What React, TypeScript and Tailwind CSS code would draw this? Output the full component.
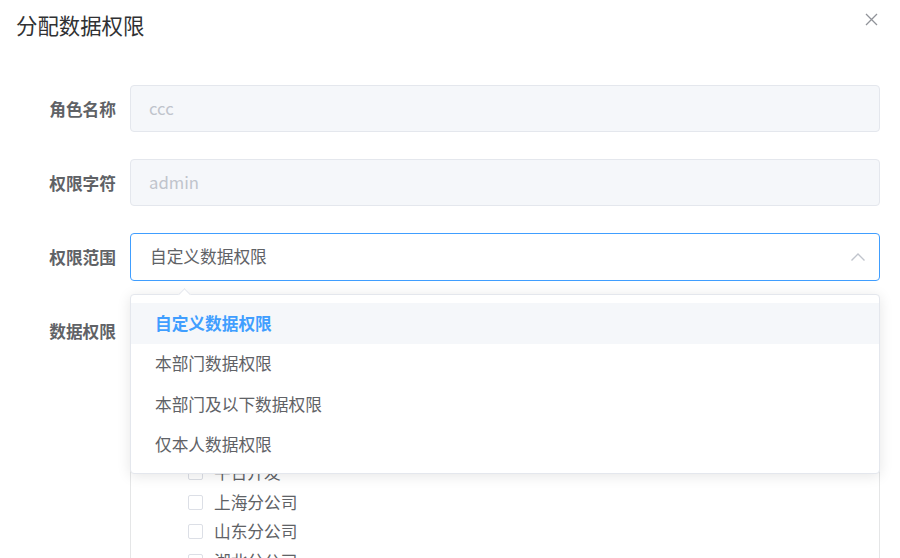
import React from 'react';

type Node = { label: string; level: number; caret?: 'down' | 'right'; covered?: boolean };

const treeRows: Node[] = [
  { label: '若依科技', level: 0, caret: 'down', covered: true },
  { label: '深圳总公司', level: 1, caret: 'right', covered: true },
  { label: '长沙分公司', level: 1, caret: 'right', covered: true },
  { label: '北京分公司', level: 1, covered: true },
  { label: '平台开发', level: 1 },
  { label: '上海分公司', level: 1 },
  { label: '山东分公司', level: 1 },
  { label: '湖北分公司', level: 1 },
];

function Checkbox() {
  return <span className="inline-block w-[15px] h-[15px] border border-[#dcdfe6] rounded-[2px] bg-white shrink-0" />;
}

function Caret({ dir }: { dir?: 'down' | 'right' }) {
  if (!dir) return null;
  return (
    <svg width="10" height="10" viewBox="0 0 10 10" className={dir === 'down' ? 'rotate-90' : ''}>
      <path d="M3 1 L8 5 L3 9 Z" fill="#c0c4cc" />
    </svg>
  );
}

function FormRow({ label, children }: { label: string; children: React.ReactNode }) {
  return (
    <div className="flex items-start mb-[27px]">
      <div className="w-[130px] shrink-0 pr-[14px] text-right h-[47px] leading-[48px] text-[16.7px] font-bold text-[#606266]">
        {label}
      </div>
      <div className="flex-1 min-w-0">{children}</div>
    </div>
  );
}

export default function App() {
  const options = ['自定义数据权限', '本部门数据权限', '本部门及以下数据权限', '仅本人数据权限'];
  return (
    <div className="w-[900px] h-[558px] overflow-hidden bg-white relative font-['Noto_Sans_CJK_SC','Noto_Sans',sans-serif]">
      {/* header */}
      <div className="flex items-start justify-between pl-[16px] pr-[22px] pt-[10px] h-[40px]">
        <div className="text-[21.4px] leading-[30px] text-[#303133]">分配数据权限</div>
        <svg width="13" height="13" viewBox="0 0 13 13" className="mt-[3px]">
          <path d="M1 1 L12 12 M12 1 L1 12" stroke="#909399" strokeWidth="1.3" />
        </svg>
      </div>

      {/* form */}
      <div className="mt-[45px] pr-[20px]">
        <FormRow label="角色名称">
          <div className="h-[47px] rounded-[4px] border border-[#e4e7ed] bg-[#f5f7fa] pl-[18px] flex items-center text-[16.7px] text-[#c0c4cc]">
            ccc
          </div>
        </FormRow>
        <FormRow label="权限字符">
          <div className="h-[47px] rounded-[4px] border border-[#e4e7ed] bg-[#f5f7fa] pl-[18px] flex items-center text-[16.7px] text-[#c0c4cc]">
            admin
          </div>
        </FormRow>
        <FormRow label="权限范围">
          <div className="relative">
            <div className="h-[48px] rounded-[4px] border border-[#409eff] bg-white pl-[19px] pr-[12px] flex items-center justify-between text-[16.7px] text-[#606266]">
              <span>自定义数据权限</span>
              <svg width="16" height="10" viewBox="0 0 16 10" className="mr-[1px]">
                <path d="M1.5 8.5 L8 2 L14.5 8.5" fill="none" stroke="#c0c4cc" strokeWidth="1.4" />
              </svg>
            </div>
            {/* dropdown */}
            <div className="absolute left-0 right-0 top-[61px] z-10 bg-white border border-[#e4e7ed] rounded-[4px] shadow-[0_2px_14px_0_rgba(0,0,0,0.1)] py-[8px]">
              <div className="absolute -top-[5px] left-[49px] w-[9px] h-[9px] bg-white border-l border-t border-[#e4e7ed] rotate-45" />
              {options.map((o, i) => (
                <div
                  key={o}
                  className={
                    i === 0
                      ? 'relative h-[40.5px] flex items-center pl-[24px] text-[16.7px] font-bold text-[#409eff] bg-[#f5f7fa]'
                      : 'relative h-[40.5px] flex items-center pl-[24px] text-[16.7px] text-[#606266]'
                  }
                >
                  {o}
                </div>
              ))}
            </div>
          </div>
        </FormRow>
        <div className="flex items-start mt-[1px]">
          <div className="w-[130px] shrink-0 pr-[14px] text-right h-[47px] leading-[47px] text-[16.7px] font-bold text-[#606266]">
            数据权限
          </div>
          <div className="flex-1 min-w-0">
            <div className="h-[31px] flex items-center gap-[30px] text-[16.7px] text-[#606266] invisible">
              <span className="flex items-center gap-[10px]"><Checkbox />展开/折叠</span>
              <span className="flex items-center gap-[10px]"><Checkbox />全选/全不选</span>
              <span className="flex items-center gap-[10px]"><Checkbox />父子联动</span>
            </div>
            <div className="border border-[#e5e6e7] rounded-[4px] bg-white h-[400px]">
              {treeRows.map((n) => (
                <div
                  key={n.label}
                  className={
                    (n.level === 0 ? 'pl-0' : 'pl-[28px]') +
                    (n.covered ? ' invisible' : '') +
                    ' flex items-center h-[29.5px] text-[16.7px] text-[#606266]'
                  }
                >
                  <span className="w-[29px] flex items-center justify-center">
                    <Caret dir={n.caret} />
                  </span>
                  <Checkbox />
                  <span className="ml-[11px]">{n.label}</span>
                </div>
              ))}
            </div>
          </div>
        </div>
      </div>
    </div>
  );
}
